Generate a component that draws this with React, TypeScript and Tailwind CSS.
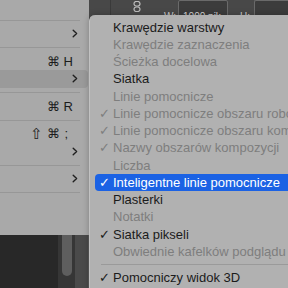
import React from 'react';

type SubItem = { label: string; checked?: boolean; disabled?: boolean; active?: boolean; sep?: boolean };

const subItems: SubItem[] = [
  { label: 'Krawędzie warstwy' },
  { label: 'Krawędzie zaznaczenia', disabled: true },
  { label: 'Ścieżka docelowa', disabled: true },
  { label: 'Siatka' },
  { label: 'Linie pomocnicze', disabled: true },
  { label: 'Linie pomocnicze obszaru roboczego', checked: true, disabled: true },
  { label: 'Linie pomocnicze obszaru kompozycji', checked: true, disabled: true },
  { label: 'Nazwy obszarów kompozycji', checked: true, disabled: true },
  { label: 'Liczba', disabled: true },
  { label: 'Inteligentne linie pomocnicze', checked: true, active: true },
  { label: 'Plasterki' },
  { label: 'Notatki', disabled: true },
  { label: 'Siatka pikseli', checked: true },
  { label: 'Obwiednie kafelków podglądu w czasie rzeczywistym', disabled: true },
  { label: '', sep: true },
  { label: 'Pomocniczy widok 3D', checked: true },
];

const Chevron = () => (
  <svg width="6" height="9" viewBox="0 0 6 9" fill="none" stroke="#1f1f1f" strokeWidth="1.4" strokeLinecap="round" strokeLinejoin="round">
    <path d="M1.2 1.2 4.6 4.5 1.2 7.8" />
  </svg>
);

const Sep = () => (
  <div className="h-[10px] flex items-center pr-[9px]">
    <div className="h-px w-full bg-[#979797]" />
  </div>
);

const LeftRow = ({ children, active }: { children?: React.ReactNode; active?: boolean }) => (
  <div className={`h-[17.5px] flex items-center justify-end pr-[10px] mr-px rounded-r-[4px] text-[#1c1c1c] ${active ? 'bg-[#9a9a9a]' : ''}`}>
    {children}
  </div>
);

const App: React.FC = () => {
  return (
    <div className="relative w-[288px] h-[288px] overflow-hidden bg-[#292929] font-['Liberation_Sans',Arial,sans-serif] text-[13px] leading-none">
      {/* toolbar strip behind the menus */}
      <div className="absolute left-[89px] top-0 right-0 h-[18px] bg-[#484848] flex items-start">
        <div className="w-[22px] h-full border-r border-[#3a3a3a]" />
        <svg className="ml-[22px] mt-px" width="8" height="11" viewBox="0 0 8 11" fill="none" stroke="#bdbdbd" strokeWidth="1.2">
          <rect x="1" y="0.5" width="6" height="4.5" rx="2.2" />
          <rect x="1" y="6" width="6" height="4.5" rx="2.2" />
        </svg>
        <span className="ml-[23px] mt-[12px] text-[10px] text-[#cfcfcf]">W:</span>
        <div className="ml-[2px] w-[50px] h-[17px] border border-[#6a6a6a] rounded-[2px] bg-[#3c3c3c] pl-[4px] pt-[11px] text-[10px] text-[#d6d6d6]">1000 pik</div>
        <span className="ml-[12px] mt-[12px] text-[10px] text-[#cfcfcf]">H:</span>
        <div className="ml-[4px] flex-1 h-[17px] border border-[#6a6a6a] border-r-0 rounded-l-[2px] bg-[#3c3c3c]" />
      </div>

      {/* lower panel with scrollbar */}
      <div className="absolute left-0 top-[235px] w-[89px] bottom-0 flex">
        <div className="w-[58px] bg-[#282828]" />
        <div className="w-[17px] bg-[#363636] flex justify-center">
          <div className="w-[10px] h-[41px] rounded-b-[5px] bg-[#5e5e5e]" />
        </div>
        <div className="flex-1 bg-[#4a4a4a] border-r border-[#5a5a5a]" />
      </div>

      {/* parent menu */}
      <div className="absolute left-0 top-0 w-[89px] h-[235px] bg-[#a9a9a9] flex flex-col">
        <div className="h-[15px]" />
        <Sep />
        <LeftRow><Chevron /></LeftRow>
        <Sep />
        <LeftRow><span className="pr-[5px] flex gap-[4px]"><span>⌘</span><span>H</span></span></LeftRow>
        <LeftRow active><Chevron /></LeftRow>
        <Sep />
        <LeftRow><span className="pr-[5px] flex gap-[4px]"><span>⌘</span><span>R</span></span></LeftRow>
        <Sep />
        <LeftRow>
          <span className="pr-[10px] flex gap-[4px] items-center">
            <span className="text-[15px]">⇧</span><span>⌘</span><span>;</span>
          </span>
        </LeftRow>
        <LeftRow><Chevron /></LeftRow>
        <Sep />
        <LeftRow><Chevron /></LeftRow>
        <Sep />
      </div>

      {/* submenu */}
      <div className="absolute left-[89px] top-[15px] w-[240px] h-[300px] rounded-[6px] bg-[#b1b1b1] border-l border-[#c2c2c2] shadow-[0_0_6px_rgba(0,0,0,0.25)] pt-[3.5px] px-[5px]">
        {subItems.map((it, i) =>
          it.sep ? (
            <div key={i} className="h-[9px] flex items-center pl-[6px]">
              <div className="h-px w-full bg-[#9a9a9a]" />
            </div>
          ) : (
            <div
              key={i}
              className={`h-[17.25px] flex items-center pl-[4px] rounded-[4px] whitespace-nowrap ${
                it.active ? 'bg-[#1b62e4] text-white' : it.disabled ? 'text-[#7e7e7e]' : 'text-[#1b1b1b]'
              }`}
            >
              <span className="w-[14px] shrink-0">{it.checked ? '✓' : ''}</span>
              <span>{it.label}</span>
            </div>
          )
        )}
      </div>
    </div>
  );
};

export default App;
